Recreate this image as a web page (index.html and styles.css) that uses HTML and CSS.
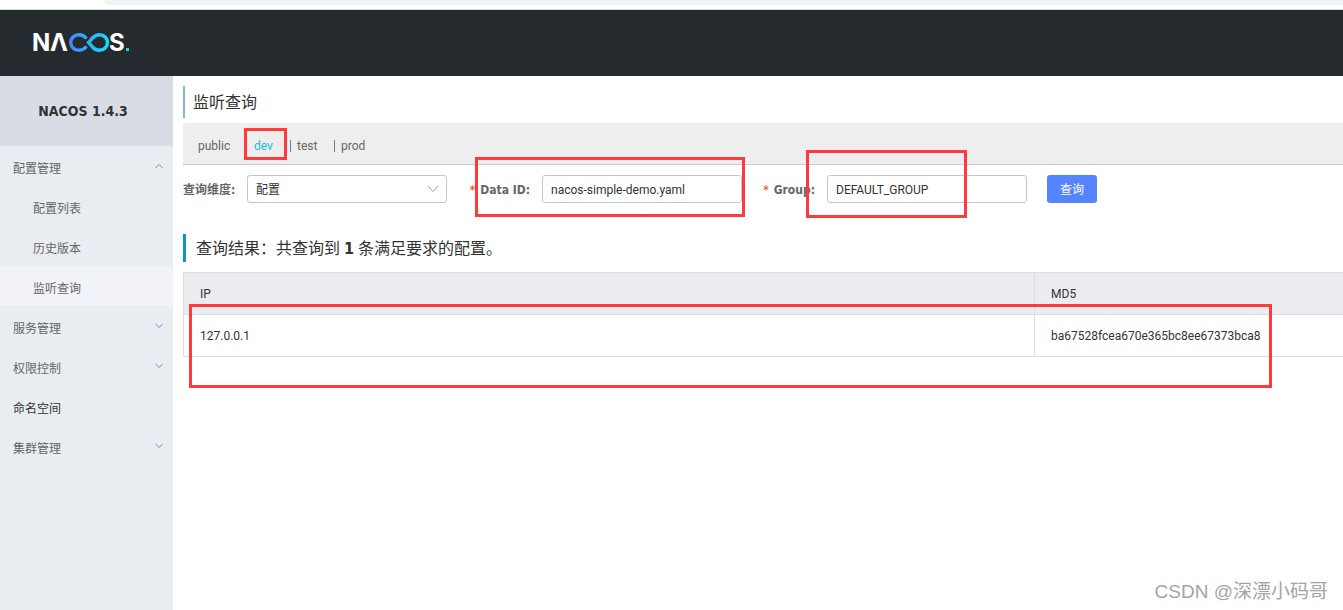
FILE: index.html
```html
<!DOCTYPE html>
<html lang="zh-CN">
<head>
<meta charset="utf-8">
<title>Nacos</title>
<link rel="stylesheet" href="styles.css">
</head>
<body>
<div class="browser-edge"><div class="browser-edge__bar"></div></div>
<header class="header">
  <a class="logo" href="#" aria-label="Nacos">
    <svg width="104" height="40" viewBox="-2 -10 104 40">
      <defs>
        <linearGradient id="loop" gradientUnits="userSpaceOnUse" x1="37" y1="0" x2="76" y2="0">
          <stop offset="0" stop-color="#4388ff"/><stop offset="1" stop-color="#14e0f4"/>
        </linearGradient>
      </defs>
      <text class="logo__text" x="-1" y="18">N</text>
      <text class="logo__text" x="17" y="18">Λ</text>
      <text class="logo__text" x="76" y="18">S</text>
      <g fill="none" stroke="url(#loop)" stroke-width="3.4">
        <path d="M53.500 5.500C51.500 3.200 49 1.700 46 1.700C41 1.700 37.700 5.300 37.700 9.500C37.700 13.700 41 17.300 46 17.300C49 17.300 51.500 15.800 53.500 13.500"/>
        <path d="M55.500 9.500L59.500 5C61.500 2.800 63.700 1.700 66.500 1.700C71 1.700 74.500 5.300 74.500 9.500C74.500 13.700 71 17.300 66.500 17.300C63.700 17.300 61.500 16.200 59.500 14Z"/>
      </g>
      <rect x="93" y="15" width="3" height="3" fill="#19d5f3"/>
    </svg>
  </a>
</header>
<div class="layout">
  <nav class="sidebar">
    <h1 class="sidebar__title">NACOS 1.4.3</h1>
    <ul class="menu">
      <li><a class="menu__item" href="#">配置管理<svg class="arrow" viewBox="0 0 8 6"><path d="M.5 5L4 1.500L7.500 5"/></svg></a></li>
      <li><a class="menu__item menu__item--sub" href="#">配置列表</a></li>
      <li><a class="menu__item menu__item--sub" href="#">历史版本</a></li>
      <li><a class="menu__item menu__item--sub menu__item--active" href="#">监听查询</a></li>
      <li><a class="menu__item" href="#">服务管理<svg class="arrow arrow--down" viewBox="0 0 8 6"><path d="M.5 1L4 4.500L7.500 1"/></svg></a></li>
      <li><a class="menu__item" href="#">权限控制<svg class="arrow arrow--down" viewBox="0 0 8 6"><path d="M.5 1L4 4.500L7.500 1"/></svg></a></li>
      <li><a class="menu__item menu__item--dark" href="#">命名空间</a></li>
      <li><a class="menu__item" href="#">集群管理<svg class="arrow arrow--down" viewBox="0 0 8 6"><path d="M.5 1L4 4.500L7.500 1"/></svg></a></li>
    </ul>
  </nav>
  <main class="content">
    <h2 class="page-title">监听查询</h2>
    <div class="spaces">
      <a class="space space--first" href="#">public</a>
      <a class="space space--active" href="#">dev</a>
      <a class="space space--divided" href="#">test</a>
      <a class="space space--divided" href="#">prod</a>
    </div>
    <form class="query">
      <label class="query__label" for="dimension">查询维度:</label>
      <span class="select">
        <select class="field" id="dimension"><option>配置</option></select>
        <svg class="select__arrow" viewBox="0 0 12 8"><path d="M.8 1L6 6.500L11.200 1"/></svg>
      </span>
      <label class="query__label query__label--data" for="dataId"><span class="required">*</span>Data ID:</label>
      <input class="field" id="dataId" type="text" value="nacos-simple-demo.yaml">
      <label class="query__label query__label--group" for="group"><span class="required">*</span>Group:</label>
      <input class="field" id="group" type="text" value="DEFAULT_GROUP">
      <button class="button" type="button">查询</button>
    </form>
    <h3 class="result-title">查询结果：共查询到 <strong>1</strong> 条满足要求的配置。</h3>
    <table class="table">
      <thead><tr><th class="table__ip">IP</th><th>MD5</th></tr></thead>
      <tbody><tr><td>127.0.0.1</td><td>ba67528fcea670e365bc8ee67373bca8</td></tr></tbody>
    </table>
  </main>
</div>
<div class="mark mark--space"></div>
<div class="mark mark--data"></div>
<div class="mark mark--group"></div>
<div class="mark mark--result"></div>
<div class="watermark">CSDN @深漂小码哥</div>
</body>
</html>
```
FILE: styles.css
```css
* { box-sizing: border-box; }
body {
  position: relative;
  display: flex;
  flex-direction: column;
  min-height: 100vh;
  margin: 0;
  overflow-x: hidden;
  background: #fff;
  color: #333;
  font: 12px/18px Roboto, "Noto Sans CJK SC", sans-serif;
}
a { color: inherit; text-decoration: none; }
h1, h2, h3, ul { margin: 0; padding: 0; font-weight: normal; }
ul { list-style: none; }

.browser-edge { height: 10px; padding-left: 104px; border-bottom: 1px solid #d5d7da; }
.browser-edge__bar { height: 5px; border-bottom-left-radius: 6px; background: #f1f3f4; }
.header { display: flex; align-items: center; height: 66px; padding: 0 31px; background: #252a2f; }
.logo { display: flex; }
.logo__text { fill: #fff; font: 700 24px Inter, sans-serif; }

.layout { display: flex; flex: 1; }
.sidebar { flex: none; width: 173px; background: #e9edf2; }
.sidebar__title {
  height: 70px;
  padding-right: 7px;
  background: #d8dde5;
  font-family: "DejaVu Sans Condensed", "DejaVu Sans", sans-serif;
  font-size: 14px;
  font-weight: 700;
  line-height: 70px;
  text-align: center;
}
.menu__item {
  display: flex;
  align-items: center;
  justify-content: space-between;
  height: 40px;
  padding: 6px 10px 0 13px;
  color: #666;
}
.menu__item--sub { padding-left: 33px; }
.menu__item--active { background: #f1f3f8; }
.menu__item--dark { color: #333; }
.arrow { width: 8px; height: 6px; margin-bottom: 6px; fill: none; stroke: #888; }
.arrow--down { stroke: #6f8fb5; }

.content { flex: 1; min-width: 0; padding: 10px 0 0 10px; }
.page-title {
  height: 32px;
  padding-left: 8px;
  border-left: 2px solid #86b5de;
  font-size: 16px;
  line-height: 34px;
}
.spaces {
  display: flex;
  align-items: center;
  height: 42px;
  margin-top: 5px;
  padding: 4px 0 0 15px;
  border-bottom: 1px solid #ccc;
  background: #eee;
  color: #666;
}
.space--first { width: 56px; }
.space--active { width: 36px; color: #1cb9dc; }
.space--divided { width: 44px; line-height: 12px; padding-left: 6px; border-left: 1px solid #3a8fc4; }

.query { display: flex; align-items: center; margin-top: 10px; }
.query__label {
  width: 64px;
  padding: 2px 12px 0 0;
  color: #666;
  font-family: "DejaVu Sans Condensed", "Noto Sans CJK SC", sans-serif;
  font-weight: 700;
  text-align: right;
  white-space: nowrap;
}
.query__label--data { width: 75px; margin-left: 20px; }
.query__label--group { width: 65px; margin-left: 20px; }
.required { margin-right: 5px; color: #ff3000; font-weight: 400; }
.field {
  width: 200px;
  height: 28px;
  padding: 2px 8px 0;
  border: 1px solid #c4c6cf;
  border-radius: 3px;
  background: #fff;
  color: #333;
  font: inherit;
  appearance: none;
}
.select { position: relative; display: flex; }
.select__arrow { position: absolute; top: 10px; right: 8px; width: 12px; height: 8px; fill: none; stroke: #999; pointer-events: none; }
.button {
  width: 50px;
  height: 28px;
  margin-left: 20px;
  padding: 2px 0 0;
  border: 0;
  border-radius: 3px;
  background: #5584ff;
  color: #fff;
  font: inherit;
}
.result-title {
  height: 28px;
  margin: 31px 0 10px;
  padding-left: 10px;
  border-left: 3px solid #0898c9;
  font-size: 16px;
  line-height: 30px;
}
.result-title strong { font-family: "DejaVu Sans Condensed", sans-serif; }
.table { width: 100%; border-collapse: collapse; table-layout: fixed; }
.table th, .table td { height: 42px; padding: 0 16px; border: 1px solid #dcdee3; border-right: 0; font-weight: 400; text-align: left; }
.table th { background: #ebecf0; }
.table .table__ip { width: 73.4%; }

.mark { position: absolute; border: 3px solid #ff3a3a; pointer-events: none; }
.mark--space { left: 244px; top: 128px; width: 43px; height: 32px; }
.mark--data { left: 475px; top: 157px; width: 270px; height: 60px; }
.mark--group { left: 806px; top: 150px; width: 161px; height: 68px; }
.mark--result { left: 189px; top: 304px; width: 1083px; height: 84px; }
.watermark {
  position: absolute;
  right: 15px;
  bottom: 4px;
  color: #a4a4a4;
  font: 19px/28px "Liberation Sans", "Noto Sans CJK SC", sans-serif;
}
```
